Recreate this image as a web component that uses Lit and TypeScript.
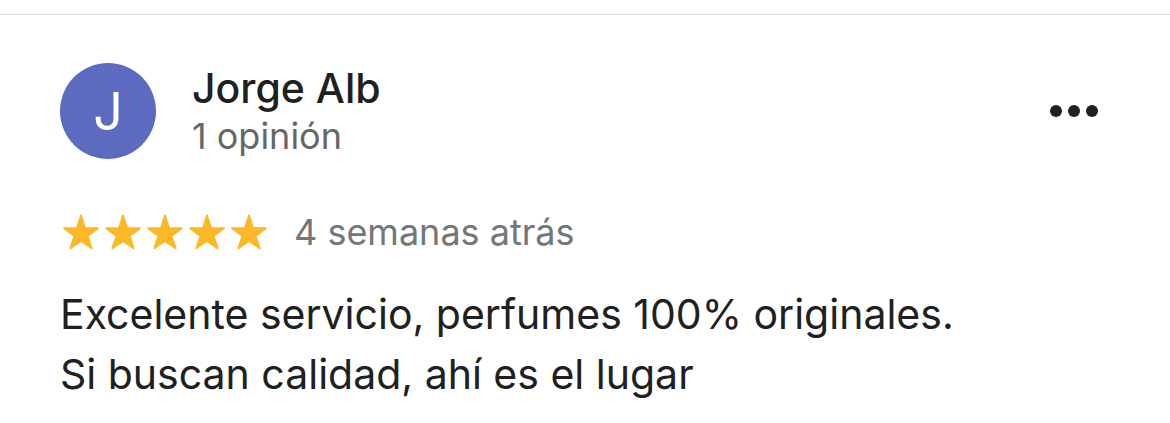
import { LitElement, html, css, svg } from "lit";
import { customElement, property } from "lit/decorators.js";

@customElement("star-rating")
class StarRating extends LitElement {
  @property({ type: Number }) value = 5;

  static styles = css`
    :host {
      display: flex;
      gap: 4px;
    }
    .star {
      display: block;
      width: 38px;
      height: 38px;
      fill: #fdb827;
      stroke: #fdb827;
      stroke-width: 2;
      stroke-linejoin: round;
    }
  `;

  render() {
    return Array.from(
      { length: this.value },
      () => html`<svg class="star" viewBox="0 0 38 38" aria-hidden="true">
        ${svg`<path d="M19 2.500L23 15l12.800.2-10.300 7.800 4.200 12.300L19 27.900 8.300 35.300 12.500 23 2.200 15.200 15 15z"/>`}
      </svg>`
    );
  }
}

@customElement("app-root")
class AppRoot extends LitElement {
  static styles = css`
    :host {
      display: block;
      font-family: Inter, "Liberation Sans", sans-serif;
      color: #202021;
      background: #fff;
    }
    .review {
      margin-top: 14px;
      border-top: 1px solid #dadada;
      padding: 47px 60px 16px;
    }
    .header {
      display: flex;
      align-items: center;
      gap: 36px;
    }
    .avatar {
      display: grid;
      place-items: center;
      width: 96px;
      height: 96px;
      border-radius: 50%;
      background: #5c6bc0;
      color: #fff;
      font-size: 52px;
    }
    .author {
      flex: 1;
      padding-top: 2px;
    }
    .name {
      margin: 0;
      font-size: 41px;
      line-height: 48px;
      font-weight: 500;
    }
    .count {
      margin: 0;
      font-size: 36px;
      line-height: 48px;
      color: #666667;
    }
    .menu {
      display: block;
      border: 0;
      padding: 8px 10px;
      background: none;
      color: inherit;
    }
    .dots {
      display: block;
      width: 52px;
      height: 16px;
      fill: currentColor;
    }
    .meta {
      display: flex;
      align-items: center;
      gap: 26px;
      margin-top: 50px;
      padding-left: 2px;
      font-size: 36px;
      line-height: 44px;
      color: #747677;
    }
    .text {
      margin: 30px 0 0;
      font-size: 41px;
      line-height: 60px;
    }
  `;

  render() {
    return html`
      <article class="review">
        <header class="header">
          <div class="avatar" aria-hidden="true">J</div>
          <div class="author">
            <h2 class="name">Jorge Alb</h2>
            <p class="count">1 opinión</p>
          </div>
          <button class="menu" aria-label="Más opciones" aria-haspopup="menu">
            <svg class="dots" viewBox="0 0 52 16" aria-hidden="true">
              <circle cx="8" cy="8" r="6" />
              <circle cx="26" cy="8" r="6" />
              <circle cx="44" cy="8" r="6" />
            </svg>
          </button>
        </header>
        <div class="meta">
          <star-rating value="5"></star-rating>
          <time>4 semanas atrás</time>
        </div>
        <p class="text">
          Excelente servicio, perfumes 100% originales.<br />Si buscan calidad,
          ahí es el lugar
        </p>
      </article>
    `;
  }
}
